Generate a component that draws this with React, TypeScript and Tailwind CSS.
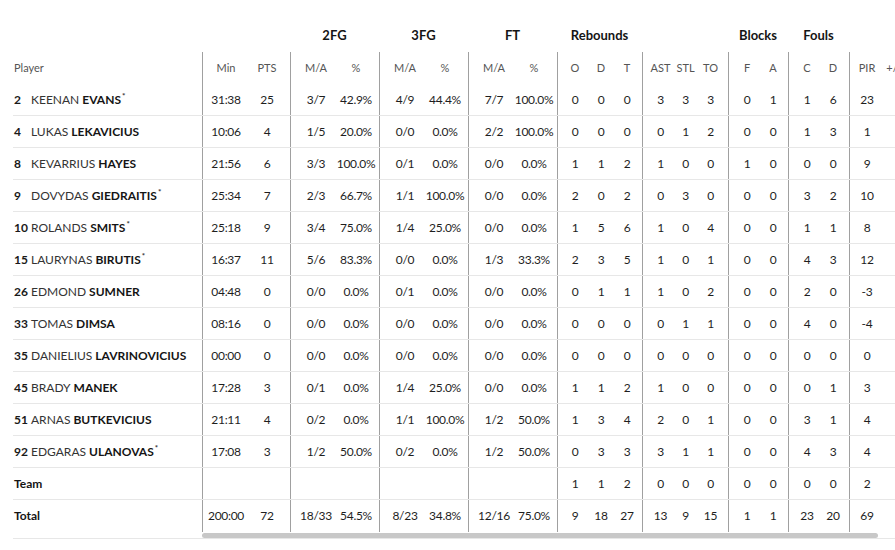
import React from 'react';

type Group = { title: string; w: string; pl: string; cols: { label: string; w: string }[] };

const groups: Group[] = [
  { title: '', w: 'w-[88px]', pl: 'pl-0', cols: [{ label: 'Min', w: 'w-[46px]' }, { label: 'PTS', w: 'w-[36px]' }] },
  { title: '2FG', w: 'w-[89px]', pl: 'pl-0', cols: [{ label: 'M/A', w: 'w-[50px]' }, { label: '%', w: 'w-[30px]' }] },
  { title: '3FG', w: 'w-[89px]', pl: 'pl-0', cols: [{ label: 'M/A', w: 'w-[50px]' }, { label: '%', w: 'w-[30px]' }] },
  { title: 'FT', w: 'w-[89px]', pl: 'pl-0', cols: [{ label: 'M/A', w: 'w-[50px]' }, { label: '%', w: 'w-[30px]' }] },
  {
    title: 'Rebounds',
    w: 'w-[85px]',
    pl: 'pl-[4px]',
    cols: [{ label: 'O', w: 'w-[26px]' }, { label: 'D', w: 'w-[26px]' }, { label: 'T', w: 'w-[26px]' }],
  },
  {
    title: '',
    w: 'w-[86px]',
    pl: 'pl-[5px]',
    cols: [{ label: 'AST', w: 'w-[25px]' }, { label: 'STL', w: 'w-[25px]' }, { label: 'TO', w: 'w-[25px]' }],
  },
  { title: 'Blocks', w: 'w-[60px]', pl: 'pl-[5px]', cols: [{ label: 'F', w: 'w-[26px]' }, { label: 'A', w: 'w-[26px]' }] },
  { title: 'Fouls', w: 'w-[61px]', pl: 'pl-[5px]', cols: [{ label: 'C', w: 'w-[26px]' }, { label: 'D', w: 'w-[26px]' }] },
  { title: '', w: 'w-[63px]', pl: 'pl-[4px]', cols: [{ label: 'PIR', w: 'w-[26px]' }, { label: '+/-', w: 'w-[28px]' }] },
];

type Player = { no: string; first: string; last: string; starter?: boolean; stats: string[][] };

const players: Player[] = [
  { no: '2', first: 'KEENAN', last: 'EVANS', starter: true, stats: [['31:38', '25'], ['3/7', '42.9%'], ['4/9', '44.4%'], ['7/7', '100.0%'], ['0', '0', '0'], ['3', '3', '3'], ['0', '1'], ['1', '6'], ['23', '']] },
  { no: '4', first: 'LUKAS', last: 'LEKAVICIUS', stats: [['10:06', '4'], ['1/5', '20.0%'], ['0/0', '0.0%'], ['2/2', '100.0%'], ['0', '0', '0'], ['0', '1', '2'], ['0', '0'], ['1', '3'], ['1', '']] },
  { no: '8', first: 'KEVARRIUS', last: 'HAYES', stats: [['21:56', '6'], ['3/3', '100.0%'], ['0/1', '0.0%'], ['0/0', '0.0%'], ['1', '1', '2'], ['1', '0', '0'], ['1', '0'], ['0', '0'], ['9', '']] },
  { no: '9', first: 'DOVYDAS', last: 'GIEDRAITIS', starter: true, stats: [['25:34', '7'], ['2/3', '66.7%'], ['1/1', '100.0%'], ['0/0', '0.0%'], ['2', '0', '2'], ['0', '3', '0'], ['0', '0'], ['3', '2'], ['10', '']] },
  { no: '10', first: 'ROLANDS', last: 'SMITS', starter: true, stats: [['25:18', '9'], ['3/4', '75.0%'], ['1/4', '25.0%'], ['0/0', '0.0%'], ['1', '5', '6'], ['1', '0', '4'], ['0', '0'], ['1', '1'], ['8', '']] },
  { no: '15', first: 'LAURYNAS', last: 'BIRUTIS', starter: true, stats: [['16:37', '11'], ['5/6', '83.3%'], ['0/0', '0.0%'], ['1/3', '33.3%'], ['2', '3', '5'], ['1', '0', '1'], ['0', '0'], ['4', '3'], ['12', '']] },
  { no: '26', first: 'EDMOND', last: 'SUMNER', stats: [['04:48', '0'], ['0/0', '0.0%'], ['0/1', '0.0%'], ['0/0', '0.0%'], ['0', '1', '1'], ['1', '0', '2'], ['0', '0'], ['2', '0'], ['-3', '']] },
  { no: '33', first: 'TOMAS', last: 'DIMSA', stats: [['08:16', '0'], ['0/0', '0.0%'], ['0/0', '0.0%'], ['0/0', '0.0%'], ['0', '0', '0'], ['0', '1', '1'], ['0', '0'], ['4', '0'], ['-4', '']] },
  { no: '35', first: 'DANIELIUS', last: 'LAVRINOVICIUS', stats: [['00:00', '0'], ['0/0', '0.0%'], ['0/0', '0.0%'], ['0/0', '0.0%'], ['0', '0', '0'], ['0', '0', '0'], ['0', '0'], ['0', '0'], ['0', '']] },
  { no: '45', first: 'BRADY', last: 'MANEK', stats: [['17:28', '3'], ['0/1', '0.0%'], ['1/4', '25.0%'], ['0/0', '0.0%'], ['1', '1', '2'], ['1', '0', '0'], ['0', '0'], ['0', '1'], ['3', '']] },
  { no: '51', first: 'ARNAS', last: 'BUTKEVICIUS', stats: [['21:11', '4'], ['0/2', '0.0%'], ['1/1', '100.0%'], ['1/2', '50.0%'], ['1', '3', '4'], ['2', '0', '1'], ['0', '0'], ['3', '1'], ['4', '']] },
  { no: '92', first: 'EDGARAS', last: 'ULANOVAS', starter: true, stats: [['17:08', '3'], ['1/2', '50.0%'], ['0/2', '0.0%'], ['1/2', '50.0%'], ['0', '3', '3'], ['3', '1', '1'], ['0', '0'], ['4', '3'], ['4', '']] },
];

const team = [['', ''], ['', ''], ['', ''], ['', ''], ['1', '1', '2'], ['0', '0', '0'], ['0', '0'], ['0', '0'], ['2', '']];
const total = [['200:00', '72'], ['18/33', '54.5%'], ['8/23', '34.8%'], ['12/16', '75.0%'], ['9', '18', '27'], ['13', '9', '15'], ['1', '1'], ['23', '20'], ['69', '']];

function StatRow({ stats, last }: { stats: string[][]; last?: boolean }) {
  return (
    <div className={`flex h-8 ${last ? '' : 'border-b border-[#e7e7e7]'}`}>
      {groups.map((g, gi) => (
        <div key={gi} className={`flex h-full shrink-0 items-center border-l border-[#a0a0a0] ${g.w} ${g.pl}`}>
          {g.cols.map((c, ci) => (
            <div key={ci} className={`${c.w} flex shrink-0 justify-center whitespace-nowrap text-[12px] tracking-[-0.3px] text-[#1e1e1e]`}>
              {stats[gi][ci]}
            </div>
          ))}
        </div>
      ))}
    </div>
  );
}

export default function App() {
  return (
    <div className="min-h-screen bg-white pl-[13px] pt-[20px]" style={{ fontFamily: 'Lato, "Open Sans", sans-serif' }}>
      <div className="flex border-b border-[#e7e7e7]">
        {/* fixed player column */}
        <div className="w-[189px] shrink-0">
          <div className="h-8" />
          <div className="flex h-8 items-center pl-[1px] text-[11px] text-[#555]">Player</div>
          {players.map((p) => (
            <div key={p.no} className="flex h-8 items-center border-b border-[#e7e7e7] pl-[1px] text-[12px]">
              <span className="w-[17px] shrink-0 font-bold text-[#1a1a1a]">{p.no}</span>
              <span className="text-[#333]">{p.first}</span>
              <span className="ml-[3px] font-bold text-[#151515]">{p.last}</span>
              {p.starter && <sup className="ml-[1px] text-[8px] font-bold text-[#333]">*</sup>}
            </div>
          ))}
          <div className="flex h-8 items-center border-b border-[#e7e7e7] pl-[1px] text-[12px] font-bold text-[#151515]">Team</div>
          <div className="flex h-8 items-center pl-[1px] text-[12px] font-bold text-[#151515]">Total</div>
          <div className="h-[6px]" />
        </div>

        {/* scrolling stats */}
        <div className="min-w-0 flex-1">
          <div className="overflow-hidden">
            <div className="w-[710px]">
              <div className="flex h-8">
                {groups.map((g, gi) => (
                  <div key={gi} className={`flex h-full shrink-0 items-center justify-center text-[13px] font-bold text-[#151515] ${g.w}`}>
                    {g.title}
                  </div>
                ))}
              </div>
              <div className="flex h-8">
                {groups.map((g, gi) => (
                  <div key={gi} className={`flex h-full shrink-0 items-center border-l border-[#a0a0a0] ${g.w} ${g.pl}`}>
                    {g.cols.map((c, ci) => (
                      <div key={ci} className={`${c.w} flex shrink-0 justify-center whitespace-nowrap text-[11px] text-[#555]`}>
                        {c.label}
                      </div>
                    ))}
                  </div>
                ))}
              </div>
              {players.map((p) => (
                <StatRow key={p.no} stats={p.stats} />
              ))}
              <StatRow stats={team} />
              <StatRow stats={total} last />
            </div>
          </div>
          {/* horizontal scrollbar */}
          <div className="h-[6px] pt-[1px]">
            <div className="h-[5px] w-[676px] rounded-full bg-[#c8c8c8]" />
          </div>
        </div>
      </div>
    </div>
  );
}
